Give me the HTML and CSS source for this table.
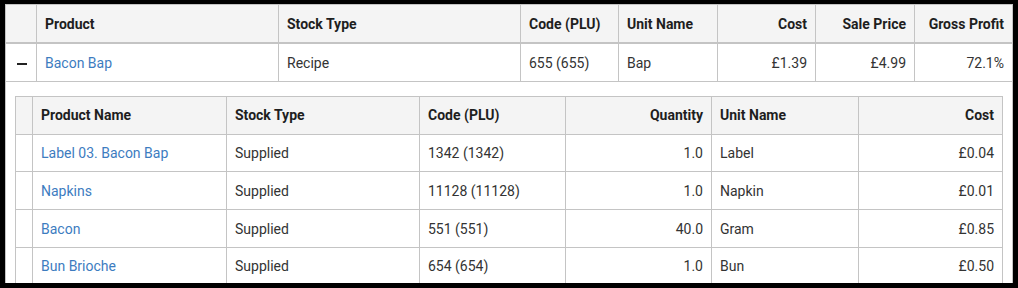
FILE: index.html
```html
<!DOCTYPE html>
<html>
<head>
<meta charset="utf-8">
<link rel="stylesheet" href="styles.css">
</head>
<body>
<div class="frame">
  <table class="grid outer">
    <colgroup>
      <col style="width:31px"><col style="width:242px"><col style="width:242px"><col style="width:98px"><col style="width:99px"><col style="width:98px"><col style="width:99px"><col style="width:98px">
    </colgroup>
    <thead>
      <tr>
        <th></th>
        <th>Product</th>
        <th>Stock Type</th>
        <th>Code (PLU)</th>
        <th>Unit Name</th>
        <th class="num">Cost</th>
        <th class="num">Sale Price</th>
        <th class="num">Gross Profit</th>
      </tr>
    </thead>
    <tbody>
      <tr class="master">
        <td class="toggle"><span class="minus"></span></td>
        <td><a class="link">Bacon Bap</a></td>
        <td>Recipe</td>
        <td>655 (655)</td>
        <td>Bap</td>
        <td class="num">£1.39</td>
        <td class="num">£4.99</td>
        <td class="num">72.1%</td>
      </tr>
      <tr class="detail">
        <td colspan="8" class="detail-cell">
          <table class="grid inner">
            <colgroup>
              <col style="width:17px"><col style="width:194px"><col style="width:193px"><col style="width:146px"><col style="width:146px"><col style="width:147px"><col style="width:144px">
            </colgroup>
            <thead>
              <tr>
                <th></th>
                <th>Product Name</th>
                <th>Stock Type</th>
                <th>Code (PLU)</th>
                <th class="num">Quantity</th>
                <th>Unit Name</th>
                <th class="num">Cost</th>
              </tr>
            </thead>
            <tbody>
              <tr><td></td><td><a class="link">Label 03. Bacon Bap</a></td><td>Supplied</td><td>1342 (1342)</td><td class="num">1.0</td><td>Label</td><td class="num">£0.04</td></tr>
              <tr><td></td><td><a class="link">Napkins</a></td><td>Supplied</td><td>11128 (11128)</td><td class="num">1.0</td><td>Napkin</td><td class="num">£0.01</td></tr>
              <tr><td></td><td><a class="link">Bacon</a></td><td>Supplied</td><td>551 (551)</td><td class="num">40.0</td><td>Gram</td><td class="num">£0.85</td></tr>
              <tr><td></td><td><a class="link">Bun Brioche</a></td><td>Supplied</td><td>654 (654)</td><td class="num">1.0</td><td>Bun</td><td class="num">£0.50</td></tr>
            </tbody>
          </table>
        </td>
      </tr>
    </tbody>
  </table>
</div>
</body>
</html>
```

FILE: styles.css
```css
html, body {
  margin: 0;
  padding: 0;
  background: #000;
}
body {
  padding: 4px 5px 0 5px;
  font-family: Roboto, "Liberation Sans", Arial, sans-serif;
  font-size: 14px;
  color: #333;
}
.frame {
  width: 1008px;
  height: 279px;
  overflow: hidden;
  background: #fff;
}
.grid {
  border-collapse: collapse;
  table-layout: fixed;
  background: #fff;
}
.outer {
  width: 1008px;
}
.grid th, .grid td {
  border: 1px solid #c4c4c4;
  padding: 0 8px 0 8px;
  text-align: left;
  white-space: nowrap;
  overflow: hidden;
}
.grid th {
  background: #f4f4f4;
  font-weight: bold;
  color: #1e1e1e;
}
.outer > thead > tr > th {
  height: 37px;
  border-bottom: 2px solid #c4c4c4;
}
.outer > tbody > tr.master > td {
  height: 37px;
}
.grid .num {
  text-align: right;
  padding-right: 8px;
}
.outer .toggle {
  padding: 0 0 0 2px;
  text-align: center;
}
.minus {
  display: inline-block;
  width: 10px;
  height: 2px;
  background: #222;
  vertical-align: middle;
}
.link {
  color: #3d7cbf;
  text-decoration: none;
}
.outer > tbody > tr.detail > td.detail-cell {
  padding: 14px 10px 0 9px;
  background: #fff;
}
.inner {
  width: 988px;
}
.inner th {
  height: 36.6px;
}
.inner td {
  height: 36.8px;
}
```
